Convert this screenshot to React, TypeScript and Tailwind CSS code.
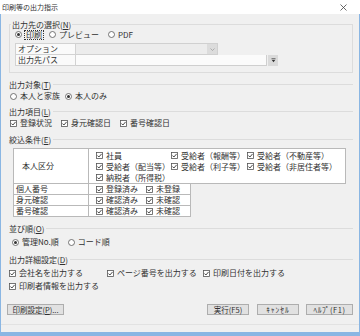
import React from "react";

function Check() {
  return (
    <svg width="7" height="7" viewBox="0 0 7 7" className="shrink-0">
      <rect x="0.5" y="0.5" width="6" height="6" fill="white" stroke="#555" strokeWidth="0.8" />
      <path d="M1.4 3.5 L2.9 5 L5.6 1.9" fill="none" stroke="#333" strokeWidth="0.9" />
    </svg>
  );
}

function Radio({ on }: { on?: boolean }) {
  return (
    <svg width="7" height="7" viewBox="0 0 7 7" className="shrink-0">
      <circle cx="3.5" cy="3.5" r="3" fill="white" stroke="#555" strokeWidth="0.8" />
      {on && <circle cx="3.5" cy="3.5" r="1.5" fill="#333" />}
    </svg>
  );
}

function CB({ label }: { label: string }) {
  return (
    <span className="flex items-center gap-[3px] whitespace-nowrap">
      <Check />
      <span>{label}</span>
    </span>
  );
}

function RB({ label, on }: { label: string; on?: boolean }) {
  return (
    <span className="flex items-center gap-[3px] whitespace-nowrap">
      <Radio on={on} />
      <span>{label}</span>
    </span>
  );
}

function Header({ text, k }: { text: string; k: string }) {
  return (
    <div className="flex items-center h-[10px]">
      <span className="whitespace-nowrap">
        {text}(<u>{k}</u>)
      </span>
      <div className="flex-1 h-px bg-[#dcdcdc] ml-[2px] mt-[-2px]" />
    </div>
  );
}

function Btn({ children, w }: { children: React.ReactNode; w: string }) {
  return (
    <div
      className={`${w} h-[11px] border border-[#adadad] bg-[#e1e1e1] flex items-center justify-center text-[7.5px] leading-[9px] whitespace-nowrap`}
    >
      {children}
    </div>
  );
}

export default function App() {
  return (
    <div className="w-[360px] h-[336px] flex flex-col bg-[#f0f0f0] text-[8px] leading-[10px] text-[#303030] font-['Noto_Sans_CJK_JP','Noto_Sans',sans-serif] overflow-hidden">
      {/* title bar */}
      <div className="h-[14px] shrink-0 bg-white flex items-center justify-between pl-[2px] pr-[13px]">
        <span className="text-[7px] leading-[9px]">印刷等の出力指示</span>
        <svg width="7" height="7" viewBox="0 0 7 7">
          <path d="M0.5 0.5 L6.5 6.5 M6.5 0.5 L0.5 6.5" stroke="#444" strokeWidth="0.8" />
        </svg>
      </div>

      <div className="flex-1 flex flex-col border-l border-r border-b-4 border-[#8ab6e3] pl-[8px] pr-[6px]">
        {/* group box */}
        <fieldset className="mt-[5px] border border-[#dcdcdc] px-[1px] pb-[6px]">
          <legend className="px-[1px] leading-[11px]">
            出力先の選択(<u>N</u>)
          </legend>
          <div className="ml-[4px] h-[9px] flex items-center">
            <Radio on />
            <span className="ml-[2px] border border-dotted border-[#333] px-[1px] leading-[8px]">印刷</span>
            <span className="ml-[5px]">
              <RB label="プレビュー" />
            </span>
            <span className="ml-[9px]">
              <RB label="PDF" />
            </span>
          </div>
          <div className="ml-[4px] mt-[4px] flex flex-col">
            <div className="flex h-[12px]">
              <div className="w-[61px] border border-[#d2d2d2] bg-[#fafafa] pl-[2px] flex items-center">オプション</div>
              <div className="w-[142px] border border-l-0 border-[#d0d0d0] bg-[#ececec] flex justify-end">
                <div className="w-[10px] bg-[#dcdcdc] flex items-center justify-center">
                  <svg width="5" height="3" viewBox="0 0 5 3">
                    <path d="M0.5 0.5 L2.5 2.5 L4.5 0.5" fill="none" stroke="#9a9a9a" strokeWidth="0.7" />
                  </svg>
                </div>
              </div>
            </div>
            <div className="flex h-[11px]">
              <div className="w-[61px] border border-t-0 border-[#d2d2d2] bg-[#fafafa] pl-[2px] flex items-center">出力先パス</div>
              <div className="w-[191px] border border-t-0 border-l-0 border-[#cfcfcf] bg-[#fbfbfb]" />
              <div className="ml-[1px] w-[10px] h-[11px] bg-[#dadada] flex items-center justify-center">
                <svg width="5" height="5" viewBox="0 0 5 5">
                  <path d="M0.5 0.8 H4.5" stroke="#333" strokeWidth="0.8" />
                  <path d="M0.8 2 H4.2 L2.5 4.3 Z" fill="#333" />
                </svg>
              </div>
            </div>
          </div>
        </fieldset>

        {/* 出力対象 */}
        <div className="mt-[7px]">
          <Header text="出力対象" k="T" />
        </div>
        <div className="mt-[1px] ml-[1px] h-[10px] flex items-center gap-[5px]">
          <RB label="本人と家族" />
          <RB label="本人のみ" on />
        </div>

        {/* 出力項目 */}
        <div className="mt-[6px]">
          <Header text="出力項目" k="L" />
        </div>
        <div className="mt-[1px] ml-[1px] h-[10px] flex items-center gap-[9px]">
          <CB label="登録状況" />
          <CB label="身元確認日" />
          <CB label="番号確認日" />
        </div>

        {/* 絞込条件 */}
        <div className="mt-[7px]">
          <Header text="絞込条件" k="E" />
        </div>
        <div className="ml-[4px] mt-[3px] w-[333px] flex flex-col">
          <div className="flex h-[36px] border border-[#b9b9b9] bg-white">
            <div className="w-[75px] shrink-0 border-r border-[#b9b9b9] flex items-center pl-[8px]">本人区分</div>
            <div className="flex-1 pl-[7px] py-[1px] grid grid-cols-[75px_76px_1fr] auto-rows-[11px] items-center">
              <CB label="社員" />
              <CB label="受給者（報酬等）" />
              <CB label="受給者（不動産等）" />
              <CB label="受給者（配当等）" />
              <CB label="受給者（利子等）" />
              <CB label="受給者（非居住者等）" />
              <CB label="納税者（所得税）" />
            </div>
          </div>
          {[
            ["個人番号", "登録済み", "未登録"],
            ["身元確認", "確認済み", "未確認"],
            ["番号確認", "確認済み", "未確認"],
          ].map(([a, b, c]) => (
            <div key={a} className="flex w-[178px] h-[11px] border border-t-0 border-[#b9b9b9] bg-white">
              <div className="w-[75px] shrink-0 border-r border-[#b9b9b9] flex items-center pl-[2px]">{a}</div>
              <div className="flex-1 pl-[7px] flex items-center">
                <span className="w-[50px]">
                  <CB label={b} />
                </span>
                <CB label={c} />
              </div>
            </div>
          ))}
        </div>

        {/* 並び順 */}
        <div className="mt-[7px]">
          <Header text="並び順" k="O" />
        </div>
        <div className="mt-[3px] ml-[3px] h-[10px] flex items-center gap-[9px]">
          <RB label="管理No.順" on />
          <RB label="コード順" />
        </div>

        {/* 出力詳細設定 */}
        <div className="mt-[8px]">
          <Header text="出力詳細設定" k="D" />
        </div>
        <div className="mt-[3px] h-[10px] flex items-center">
          <span className="w-[98px]">
            <CB label="会社名を出力する" />
          </span>
          <span className="w-[96px]">
            <CB label="ページ番号を出力する" />
          </span>
          <CB label="印刷日付を出力する" />
        </div>
        <div className="mt-[3px] h-[10px] flex items-center">
          <CB label="印刷者情報を出力する" />
        </div>

        {/* buttons */}
        <div className="mt-[13px] -ml-[2px] flex items-center">
          <Btn w="w-[57px]">
            印刷設定(<u>P</u>)...
          </Btn>
          <div className="flex-1" />
          <Btn w="w-[42px]">実行(F5)</Btn>
          <div className="w-[8px]" />
          <Btn w="w-[42px]">
            <span className="tracking-[1px]">ｷｬﾝｾﾙ</span>
          </Btn>
          <div className="w-[7px]" />
          <Btn w="w-[47px]">
            <span className="tracking-[0.5px]">ﾍﾙﾌﾟ(F1)</span>
          </Btn>
        </div>
        <div className="mt-[9px] -ml-[8px] -mr-[6px] h-px bg-[#e2e2e2]" />
      </div>
    </div>
  );
}
